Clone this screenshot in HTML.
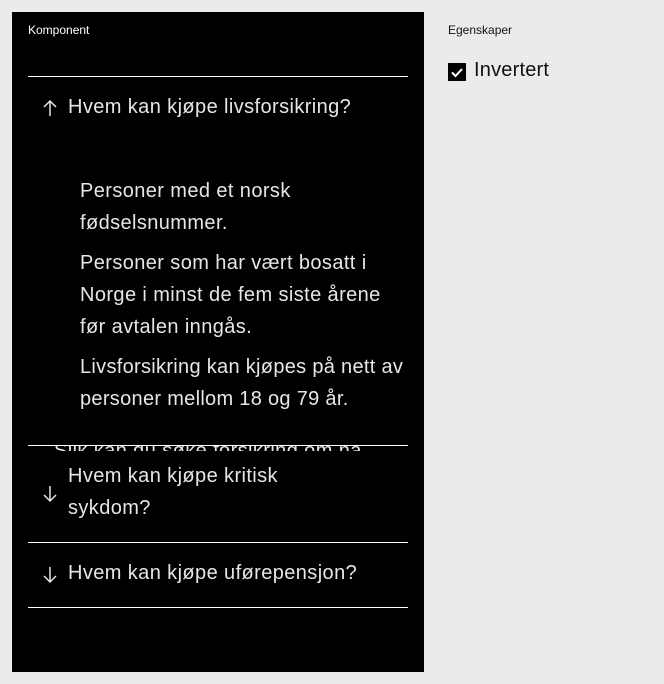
<!DOCTYPE html>
<html><head><meta charset="utf-8"><style>
body{margin:0;width:664px;height:684px;background:#ebebeb;font-family:"Liberation Sans",sans-serif;position:relative;overflow:hidden}
.panel{position:absolute;left:12px;top:12px;width:412px;height:660px;background:#000}
.a{position:absolute;color:#e6e6e6}
.line{position:absolute;left:28px;width:380px;height:1px;background:#fff}
.q{position:absolute;left:68px;font-size:20px;color:#e6e6e6;line-height:32px;letter-spacing:0.4px}
.ar{position:absolute;left:42px}
.p{position:absolute;left:80px;width:325px;font-size:20px;line-height:32px;color:#e6e6e6;letter-spacing:0.4px}
</style></head><body>
<div class="panel"></div>
<div class="a" style="left:28px;top:23px;font-size:12px;color:#fff">Komponent</div>
<div class="line" style="top:76px"></div>
<svg class="ar" style="top:99px" width="16" height="18"><path d="M8 17V2M2 8l6-6 6 6" stroke="#e6e6e6" stroke-width="1.5" fill="none"/></svg>
<div class="q" style="top:91px">Hvem kan kjøpe livsforsikring?</div>
<div class="p" style="top:175px">Personer med et norsk fødselsnummer.</div>
<div class="p" style="top:247px">Personer som har vært bosatt i Norge i minst de fem siste årene før avtalen inngås.</div>
<div class="p" style="top:351px;width:340px;letter-spacing:0.3px">Livsforsikring kan kjøpes på nett av personer mellom 18 og 79 år.</div>
<div style="position:absolute;left:54px;top:446px;width:350px;height:5px;overflow:hidden"><div class="q" style="left:0;top:-11px;white-space:nowrap">Slik kan du søke forsikring om nå</div></div>
<div class="line" style="top:445px"></div>
<svg class="ar" style="top:485px" width="16" height="18"><path d="M8 1v15M2 10l6 6 6-6" stroke="#e6e6e6" stroke-width="1.5" fill="none"/></svg>
<div class="q" style="top:460px">Hvem kan kjøpe kritisk<br>sykdom?</div>
<div class="line" style="top:542px"></div>
<svg class="ar" style="top:566px" width="16" height="18"><path d="M8 1v15M2 10l6 6 6-6" stroke="#e6e6e6" stroke-width="1.5" fill="none"/></svg>
<div class="q" style="top:557px">Hvem kan kjøpe uførepensjon?</div>
<div class="line" style="top:607px"></div>
<div class="a" style="left:448px;top:23px;font-size:12px;color:#111">Egenskaper</div>
<div style="position:absolute;left:448px;top:63px;width:18px;height:18px;background:#000"><svg width="18" height="18"><path d="M4 9.5l3.5 3.5L14 6" stroke="#fff" stroke-width="2" fill="none"/></svg></div>
<div class="a" style="left:474px;top:59px;font-size:20px;color:#111;letter-spacing:0.2px">Invertert</div>
</body></html>
